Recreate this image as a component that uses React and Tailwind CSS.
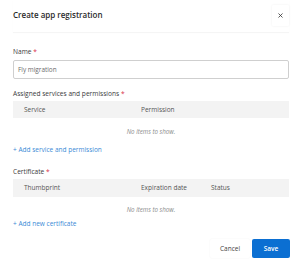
import { X } from "lucide-react";

const FONT = { fontFamily: '"Open Sans", "Noto Sans", sans-serif' };

function Label({ children, className = "" }) {
  return (
    <div className={`text-[6.6px] leading-[10px] text-[#3a3a3a] ${className}`}>
      {children} <span className="text-[#d9304a]">*</span>
    </div>
  );
}

function EmptyRow({ className = "" }) {
  return (
    <div className={`text-center italic text-[6.2px] leading-[10px] text-[#8a8a8a] ${className}`}>
      No items to show.
    </div>
  );
}

export default function App() {
  return (
    <div className="w-[300px] h-[269px] bg-white pl-[13px] pr-[11px]" style={FONT}>
      {/* header */}
      <div className="flex items-start justify-between h-[32px] shadow-[0_1px_1px_rgba(0,0,0,0.04)]">
        <div className="pt-[10px] text-[8px] leading-[10px] font-semibold text-[#2b2b2b]">
          Create app registration
        </div>
        <button className="mt-[5px] w-[17px] h-[21px] flex items-center justify-center rounded-[1px] shadow-[0_0_2px_rgba(0,0,0,0.08)] text-[#333]">
          <X size={7} strokeWidth={2.75} />
        </button>
      </div>

      <Label className="mt-[15px]">Name</Label>
      <div className="mt-[3px] h-[19px] border border-[#cfcfcf] rounded-[2px] flex items-center px-[4px] text-[6.4px] text-[#6b6b6b]">
        Fly migration
      </div>

      <Label className="mt-[10px]">Assigned services and permissions</Label>
      <div className="mt-[2px] h-[17px] bg-[#f3f3f3] grid grid-cols-[117px_1fr] items-center text-[6.5px] text-[#555]">
        <div className="pl-[11px]">Service</div>
        <div className="pl-[11px]">Permission</div>
      </div>
      <div className="h-[24px] pt-[9px]">
        <EmptyRow />
      </div>
      <div className="mt-[3px] text-[6.5px] leading-[10px] text-[#3a8ad6]">
        + Add service and permission
      </div>

      <Label className="mt-[12px]">Certificate</Label>
      <div className="mt-[2px] h-[18px] bg-[#f3f3f3] grid grid-cols-[117px_70px_1fr] items-center text-[6.5px] text-[#555]">
        <div className="pl-[11px]">Thumbprint</div>
        <div className="pl-[11px]">Expiration date</div>
        <div className="pl-[11px]">Status</div>
      </div>
      <div className="h-[24px] pt-[8px]">
        <EmptyRow />
      </div>
      <div className="-mt-[2px] text-[6.5px] leading-[10px] text-[#3a8ad6]">
        + Add new certificate
      </div>

      <div className="mt-[10px] flex justify-end gap-[2px] -mr-[1px]">
        <button className="w-[40px] h-[19px] rounded-[2px] bg-white shadow-[0_0_2px_rgba(0,0,0,0.06)] text-[6.5px] text-[#444]">
          Cancel
        </button>
        <button className="w-[38px] h-[19px] rounded-[2px] bg-[#0b6fd2] text-[6.5px] font-semibold text-white">
          Save
        </button>
      </div>
    </div>
  );
}
